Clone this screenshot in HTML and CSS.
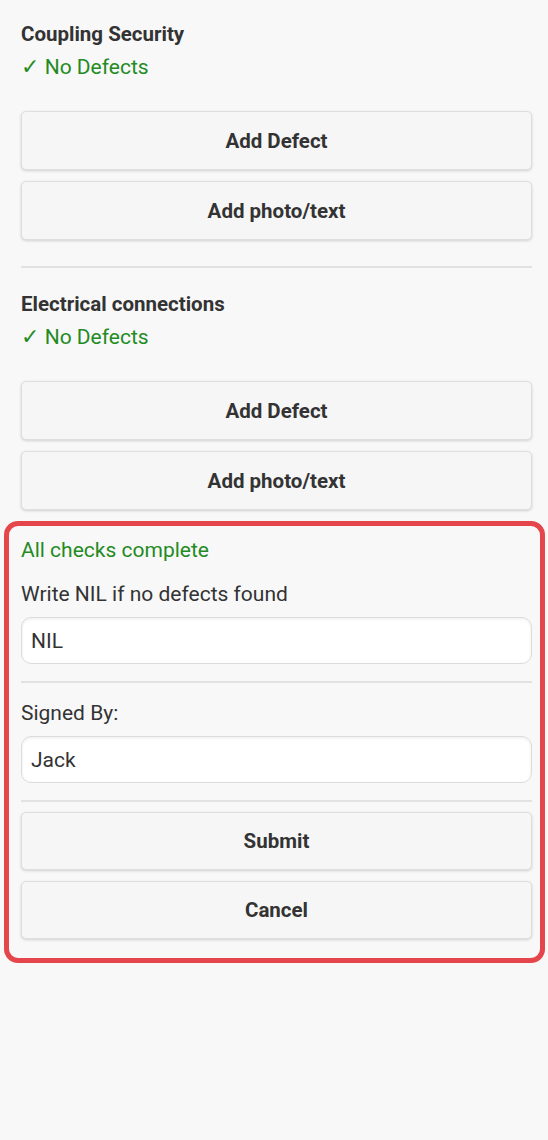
FILE: index.html
```html
<!DOCTYPE html>
<html lang="en">
<head>
<meta charset="utf-8">
<title>Checks</title>
<link rel="stylesheet" href="styles.css">
</head>
<body>
<div class="page">
  <section class="check">
    <h2 class="check-title">Coupling Security</h2>
    <p class="status"><span class="tick">✓</span> No Defects</p>
    <div class="btn-group">
      <button class="btn">Add Defect</button>
      <button class="btn">Add photo/text</button>
    </div>
  </section>
  <hr class="divider divider-main">
  <section class="check">
    <h2 class="check-title second">Electrical connections</h2>
    <p class="status"><span class="tick">✓</span> No Defects</p>
    <div class="btn-group">
      <button class="btn">Add Defect</button>
      <button class="btn">Add photo/text</button>
    </div>
  </section>
  <section class="summary">
    <p class="complete">All checks complete</p>
    <label class="field-label" for="defects">Write NIL if no defects found</label>
    <input class="field" id="defects" type="text" value="NIL">
    <hr class="divider divider-form">
    <label class="field-label" for="signed">Signed By:</label>
    <input class="field" id="signed" type="text" value="Jack">
    <hr class="divider divider-form">
    <div class="btn-group">
      <button class="btn">Submit</button>
      <button class="btn">Cancel</button>
    </div>
  </section>
</div>
</body>
</html>
```

FILE: styles.css
```css
* { box-sizing: border-box; }

html, body {
  margin: 0;
  background: #f8f8f8;
}

body {
  font-family: Roboto, "Liberation Sans", Arial, sans-serif;
  color: #333;
  font-size: 21px;
}

.page {
  padding: 22px 16px 40px 21px;
}

.check-title {
  margin: 0;
  font-size: 20.5px;
  font-weight: 700;
  line-height: 24px;
  color: #333;
}

.check-title.second { margin-top: 24px; }

.status {
  margin: 9px 0 0;
  line-height: 24px;
  color: #238b23;
}

.tick {
  font-family: "DejaVu Sans", sans-serif;
  font-size: 22px;
}

.check .btn-group { margin-top: 32px; }

.btn-group {
  display: flex;
  flex-direction: column;
  gap: 11px;
}

.btn {
  height: 59px;
  width: 100%;
  background: #f6f6f6;
  border: 1px solid #dedede;
  border-radius: 5px;
  box-shadow: 0 1px 3px rgba(0, 0, 0, 0.16);
  font-family: inherit;
  font-size: 20.5px;
  font-weight: 700;
  color: #333;
  padding: 0;
}

.divider {
  border: 0;
  height: 2px;
  background: #e2e2e2;
  margin: 0;
}

.divider-main { margin-top: 26px; }

.summary {
  margin: 11px -13px 0 -17px;
  border: 5px solid #e5464b;
  border-radius: 14px;
  padding: 12px 8px 19px 12px;
  display: flex;
  flex-direction: column;
}

.complete {
  margin: 0;
  line-height: 24px;
  color: #238b23;
}

.field-label {
  display: block;
  margin-top: 20px;
  line-height: 24px;
  color: #333;
}

.divider-form + .field-label { margin-top: 18px; }

.field {
  margin-top: 11px;
  height: 47px;
  width: 100%;
  background: #fff;
  border: 1px solid #dcdcdc;
  border-radius: 10px;
  box-shadow: inset 0 1px 3px rgba(0, 0, 0, 0.08);
  padding: 0 9px;
  font-family: inherit;
  font-size: 21px;
  color: #333;
}

.divider-form { margin-top: 17px; }

.summary .btn-group { margin-top: 10px; }

.summary .btn { height: 58px; }
```
